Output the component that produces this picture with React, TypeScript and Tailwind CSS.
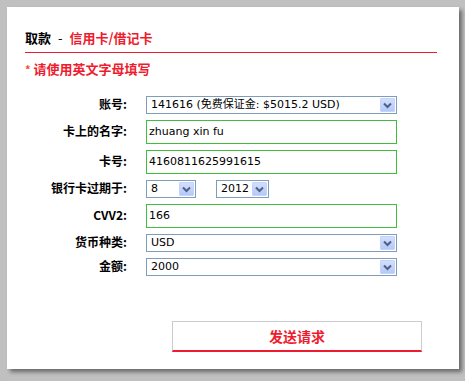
import React from 'react';

const cjk = "font-['Noto_Sans_CJK_SC',sans-serif]";
const field = "font-['DejaVu_Sans','Noto_Sans_CJK_SC',sans-serif] text-[11px] text-black";

function Arrow() {
  return (
    <div className="m-px flex w-[15px] items-center justify-center rounded-[1px] border border-[#c3d3fd] bg-gradient-to-b from-[#d3defd] to-[#b5c8f7]">
      <svg width="9" height="7" viewBox="0 0 9 7">
        <path d="M1 1.5 L4.5 5 L8 1.5" fill="none" stroke="#4d6185" strokeWidth="2" />
      </svg>
    </div>
  );
}

function Select({ value, width }: { value: string; width: string }) {
  return (
    <div className={`flex h-[18px] border border-[#7f9db9] bg-white ${width}`}>
      <div className={`flex flex-1 items-center pl-[4px] whitespace-nowrap ${field}`}>{value}</div>
      <Arrow />
    </div>
  );
}

function TextInput({ value }: { value: string }) {
  return (
    <div className={`flex h-[24px] w-[251px] items-center border border-[#3dbf3d] bg-white pl-[2px] ${field}`}>
      {value}
    </div>
  );
}

function Row({ label, children }: { label: string; children: React.ReactNode }) {
  return (
    <div className="flex items-center">
      <div className={`w-[102px] pb-[3px] text-right text-[12px] leading-[14px] font-bold text-black ${cjk}`}>{label}</div>
      <div className="ml-[19px] flex items-center">{children}</div>
    </div>
  );
}

export default function App() {
  return (
    <div className="h-[381px] w-[465px] bg-[#c0c0c0] pt-[7px] pl-[7px]">
      <div className="h-[362px] w-[452px] bg-white pt-[23px] pr-[22px] pl-[18px] shadow-[3px_3px_4px_rgba(0,0,0,0.45)]">
        <div className={`flex border-b border-[#ee1c2e] pb-[6px] text-[13px] leading-[16px] font-bold ${cjk}`}>
          <span className="text-black">取款</span>
          <span className="px-[7px] font-normal text-black">-</span>
          <span className="text-[#ee1c2e]">信用卡/借记卡</span>
        </div>
        <div className={`mt-[8px] flex text-[13px] leading-[16px] font-bold text-[#ee1c2e] ${cjk}`}>
          <span className="pr-[3px] text-[11px] text-[#f0502e]">*</span>
          <span>请使用英文字母填写</span>
        </div>
        <div className="mt-[19px] flex flex-col gap-[6px]">
          <Row label="账号:">
            <Select value="141616 (免费保证金: $5015.2 USD)" width="w-[251px]" />
          </Row>
          <Row label="卡上的名字:">
            <TextInput value="zhuang xin fu" />
          </Row>
          <Row label="卡号:">
            <TextInput value="4160811625991615" />
          </Row>
          <Row label="银行卡过期于:">
            <Select value="8" width="w-[50px]" />
            <div className="ml-[20px]">
              <Select value="2012" width="w-[53px]" />
            </div>
          </Row>
          <Row label="CVV2:">
            <TextInput value="166" />
          </Row>
          <Row label="货币种类:">
            <Select value="USD" width="w-[251px]" />
          </Row>
          <Row label="金额:">
            <Select value="2000" width="w-[251px]" />
          </Row>
        </div>
        <div
          className={`mt-[45px] ml-[147px] flex h-[31px] w-[250px] items-center justify-center border border-b-2 border-[#cccccc] border-b-[#ee1c2e] text-[14px] font-bold text-[#ee1c2e] ${cjk}`}
        >
          发送请求
        </div>
      </div>
    </div>
  );
}
